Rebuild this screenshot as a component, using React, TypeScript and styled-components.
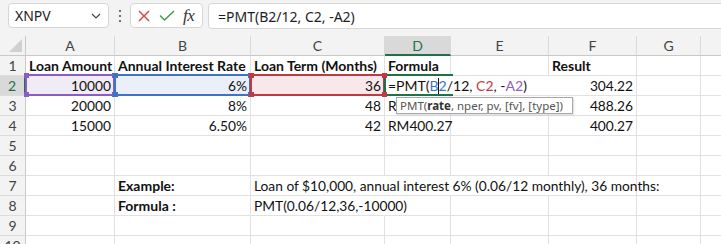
import React from "react";
import styled, { createGlobalStyle, css } from "styled-components";

const Global = createGlobalStyle`
  html, body { margin: 0; padding: 0; background: #ffffff; }
  body { font-family: "Lato", "Liberation Sans", sans-serif; overflow: hidden; }
  * { box-sizing: border-box; }
`;

const UI_FONT = `"Noto Sans", "Open Sans", "Liberation Sans", sans-serif`;
const CELL_FONT = `"Lato", "Liberation Sans", sans-serif`;

const Page = styled.div`
  width: 721px;
  height: 244px;
  overflow: hidden;
  position: relative;
  background: #ffffff;
`;

const Toolbar = styled.div`
  height: 36px;
  display: flex;
  align-items: flex-start;
  padding-top: 3px;
  background: #f3f3f3;
  font-family: ${UI_FONT};
`;

const NameBox = styled.div`
  margin-left: 8px;
  width: 101px;
  height: 25px;
  background: #ffffff;
  border: 1px solid #d6d6d6;
  border-radius: 4px;
  display: flex;
  align-items: center;
  justify-content: space-between;
  padding: 0 7px 0 6px;
  font-size: 14px;
  color: #222;
`;

const Dots = styled.div`
  width: 21px;
  height: 25px;
  display: flex;
  flex-direction: column;
  align-items: center;
  justify-content: center;
  gap: 3px;
  & > i {
    width: 2px;
    height: 2px;
    background: #444;
    border-radius: 1px;
  }
`;

const ActionBox = styled.div`
  width: 73px;
  height: 25px;
  background: #ffffff;
  border: 1px solid #d6d6d6;
  border-radius: 4px;
  display: flex;
  align-items: center;
  padding-left: 7px;
  gap: 9px;
`;

const Fx = styled.span`
  font-family: "Liberation Serif", "DejaVu Serif", serif;
  font-style: italic;
  font-size: 17px;
  color: #333;
  margin-left: -1px;
  letter-spacing: -0.5px;
`;

const FormulaInput = styled.div`
  margin-left: 5px;
  flex: 1;
  margin-right: -10px;
  height: 26px;
  background: #ffffff;
  border: 1px solid #d6d6d6;
  border-radius: 4px;
  display: flex;
  align-items: center;
  padding-left: 9px;
  font-size: 14px;
  color: #1e1e1e;
`;

const COLS = [26, 89, 136, 134, 66, 98, 88, 64, 40];

const Sheet = styled.div`
  display: grid;
  grid-template-columns: ${COLS.map((c) => c + "px").join(" ")};
  grid-auto-rows: 20px;
  font-family: ${CELL_FONT};
  font-size: 13.75px;
  color: #111;
`;

const ColHead = styled.div<{ $active?: boolean }>`
  background: ${(p) => (p.$active ? "#d9d9d9" : "#f3f3f3")};
  border-right: 1px solid #d9d9d9;
  border-bottom: 1px solid #c8c8c8;
  display: flex;
  align-items: center;
  justify-content: center;
  color: ${(p) => (p.$active ? "#1e7145" : "#444")};
  font-size: 14px;
  ${(p) =>
    p.$active &&
    css`
      border-bottom: 2px solid #1e7145;
      padding-top: 1px;
    `}
`;

const Corner = styled.div`
  background: #f3f3f3;
  border-right: 1px solid #c8c8c8;
  border-bottom: 1px solid #c8c8c8;
  position: relative;
  &::after {
    content: "";
    position: absolute;
    right: 3px;
    bottom: 3px;
    width: 0;
    height: 0;
    border-left: 13px solid transparent;
    border-bottom: 13px solid #d0d0d0;
  }
`;

const RowHead = styled.div<{ $active?: boolean }>`
  background: ${(p) => (p.$active ? "#d9d9d9" : "#f3f3f3")};
  border-right: ${(p) => (p.$active ? "2px solid #1e7145" : "1px solid #c8c8c8")};
  border-bottom: 1px solid #dcdcdc;
  display: flex;
  align-items: center;
  justify-content: center;
  color: ${(p) => (p.$active ? "#1e7145" : "#444")};
  font-size: 14px;
`;

const Cell = styled.div<{ $right?: boolean; $bold?: boolean; $span?: number }>`
  border-right: 1px solid #e1e1e1;
  border-bottom: 1px solid #e1e1e1;
  padding: 0 3px;
  line-height: 19px;
  white-space: nowrap;
  overflow: visible;
  text-align: ${(p) => (p.$right ? "right" : "left")};
  font-weight: ${(p) => (p.$bold ? 700 : 400)};
  font-size: ${(p) => (p.$bold ? "14px" : "13.75px")};
  ${(p) => p.$span && css`grid-column: span ${p.$span};`}
  position: relative;
`;

const RefCell = styled(Cell)<{ $color: string; $tint: string }>`
  background: ${(p) => p.$tint};
  &::after {
    content: "";
    position: absolute;
    left: -1px;
    right: -1px;
    top: -2px;
    bottom: -1px;
    border: 2px solid ${(p) => p.$color};
    pointer-events: none;
  }
`;

const Handle = styled.span<{ $color: string; $x: "l" | "r"; $y: "t" | "b" }>`
  position: absolute;
  width: 5px;
  height: 5px;
  background: ${(p) => p.$color};
  z-index: 2;
  ${(p) => (p.$x === "l" ? "left: -2px;" : "right: -3px;")}
  ${(p) => (p.$y === "t" ? "top: -3px;" : "bottom: -2px;")}
`;

const EditCell = styled(Cell)`
  border-right: none;
  z-index: 1;
  font-size: 14px;
  &::before {
    content: "";
    position: absolute;
    left: -1px;
    top: -2px;
    width: 67px;
    bottom: -1px;
    border-top: 2px solid #1e7145;
    border-bottom: 2px solid #1e7145;
    border-left: 2px solid #1e7145;
    pointer-events: none;
  }
`;

const Ref = styled.span<{ $color: string }>`
  color: ${(p) => p.$color};
`;

const Caret = styled.span`
  display: inline-block;
  width: 1px;
  height: 16px;
  background: #111;
  vertical-align: -3px;
  margin: 0 -0.5px;
`;

const Tooltip = styled.div`
  position: absolute;
  left: 396px;
  top: 97px;
  width: 177px;
  height: 17px;
  background: #ffffff;
  border: 1px solid #a8a8a8;
  box-shadow: 1px 1px 2px rgba(0, 0, 0, 0.15);
  font-family: ${UI_FONT};
  font-size: 11.5px;
  color: #555;
  line-height: 15px;
  padding-left: 3px;
  white-space: nowrap;
  z-index: 5;
`;

const Bold = styled.span`
  color: #333;
  font-weight: 700;
`;

const PURPLE = "#8a5cc5";
const BLUE = "#3f72c9";
const RED = "#c4393f";

const letters = ["A", "B", "C", "D", "E", "F", "G", ""];

function Handles({ color }: { color: string }) {
  return (
    <>
      <Handle $color={color} $x="l" $y="t" />
      <Handle $color={color} $x="r" $y="t" />
      <Handle $color={color} $x="l" $y="b" />
      <Handle $color={color} $x="r" $y="b" />
    </>
  );
}

const Empty = ({ n }: { n: number }) => (
  <>
    {Array.from({ length: n }).map((_, i) => (
      <Cell key={i} />
    ))}
  </>
);

export default function App() {
  return (
    <Page>
      <Global />
      <Toolbar>
        <NameBox>
          <span>XNPV</span>
          <svg width="10" height="6" viewBox="0 0 10 6">
            <path d="M1 1l4 4 4-4" fill="none" stroke="#444" strokeWidth="1.2" />
          </svg>
        </NameBox>
        <Dots>
          <i />
          <i />
          <i />
        </Dots>
        <ActionBox>
          <svg width="12" height="12" viewBox="0 0 12 12">
            <path d="M1 1l10 10M11 1L1 11" stroke="#e0393e" strokeWidth="1.4" fill="none" />
          </svg>
          <svg width="16" height="11" viewBox="0 0 16 11">
            <path d="M1 5.5l4.5 4.5L15 1" stroke="#3c9a4c" strokeWidth="1.4" fill="none" />
          </svg>
          <Fx>fx</Fx>
        </ActionBox>
        <FormulaInput>=PMT(B2/12, C2, -A2)</FormulaInput>
      </Toolbar>
      <Sheet>
        <Corner />
        {letters.map((l, i) => (
          <ColHead key={i} $active={l === "D"}>
            {l}
          </ColHead>
        ))}

        <RowHead>1</RowHead>
        <Cell $bold>Loan Amount</Cell>
        <Cell $bold>Annual Interest Rate</Cell>
        <Cell $bold>Loan Term (Months)</Cell>
        <Cell $bold>Formula</Cell>
        <Cell />
        <Cell $bold>Result</Cell>
        <Empty n={2} />

        <RowHead $active>2</RowHead>
        <RefCell $right $color={PURPLE} $tint="#efebf7">
          10000
          <Handles color={PURPLE} />
        </RefCell>
        <RefCell $right $color={BLUE} $tint="#eaeff9">
          6%
          <Handles color={BLUE} />
        </RefCell>
        <RefCell $right $color={RED} $tint="#f9e8e9">
          36
          <Handles color={RED} />
        </RefCell>
        <EditCell $span={2}>
          =PMT(<Ref $color={BLUE}>B</Ref>
          <Caret />
          <Ref $color={BLUE}>2</Ref>/12, <Ref $color={RED}>C2</Ref>, -<Ref $color={PURPLE}>A2</Ref>)
        </EditCell>
        <Cell $right>304.22</Cell>
        <Empty n={2} />

        <RowHead>3</RowHead>
        <Cell $right>20000</Cell>
        <Cell $right>8%</Cell>
        <Cell $right>48</Cell>
        <Cell>RM488.26</Cell>
        <Cell />
        <Cell $right>488.26</Cell>
        <Empty n={2} />

        <RowHead>4</RowHead>
        <Cell $right>15000</Cell>
        <Cell $right>6.50%</Cell>
        <Cell $right>42</Cell>
        <Cell>RM400.27</Cell>
        <Cell />
        <Cell $right>400.27</Cell>
        <Empty n={2} />

        <RowHead>5</RowHead>
        <Empty n={8} />
        <RowHead>6</RowHead>
        <Empty n={8} />

        <RowHead>7</RowHead>
        <Cell />
        <Cell $bold>Example:</Cell>
        <Cell $span={4}>Loan of $10,000, annual interest 6% (0.06/12 monthly), 36 months:</Cell>
        <Empty n={2} />

        <RowHead>8</RowHead>
        <Cell />
        <Cell $bold>Formula :</Cell>
        <Cell $span={2}>PMT(0.06/12,36,-10000)</Cell>
        <Empty n={4} />

        <RowHead>9</RowHead>
        <Empty n={8} />
        <RowHead>10</RowHead>
        <Empty n={8} />
      </Sheet>
      <Tooltip>
        PMT(<Bold>rate</Bold>, nper, pv, [fv], [type])
      </Tooltip>
    </Page>
  );
}
